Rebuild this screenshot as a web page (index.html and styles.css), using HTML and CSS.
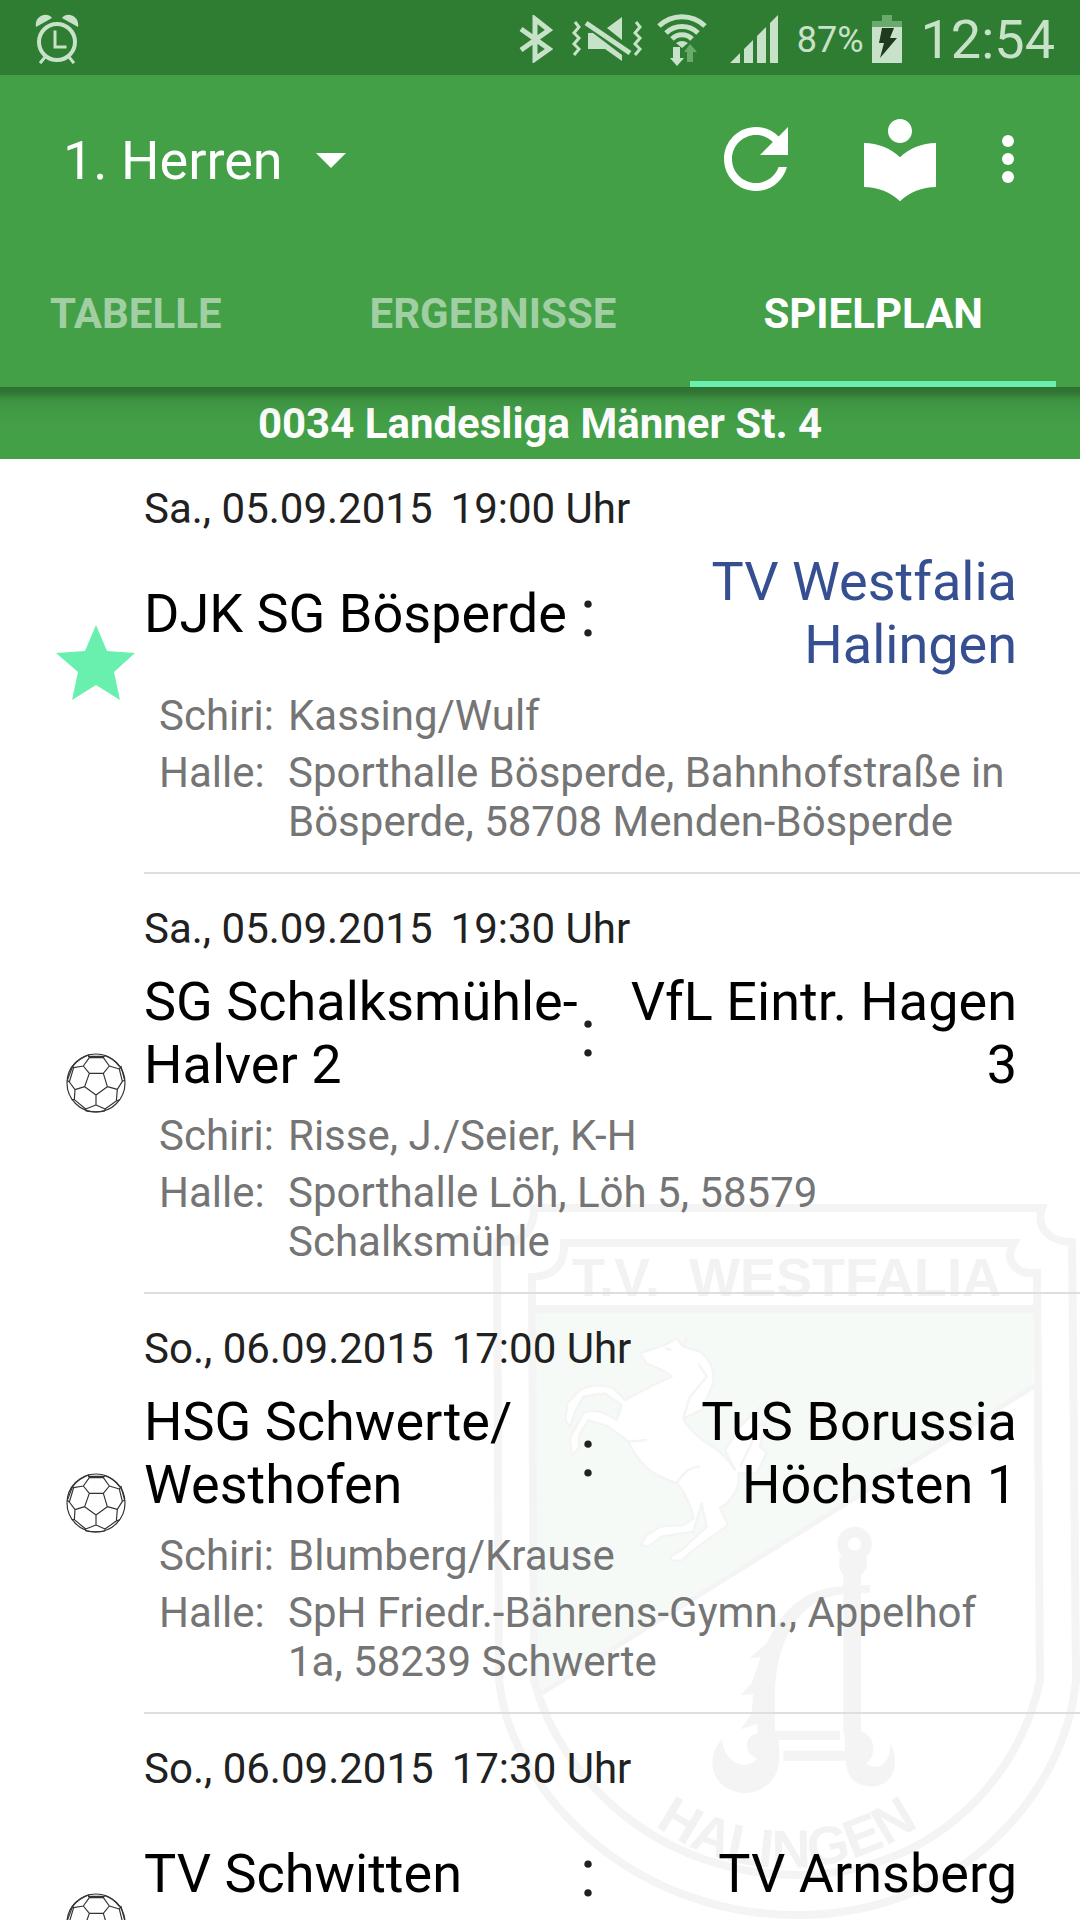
FILE: index.html
```html
<!DOCTYPE html>
<html lang="de">
<head>
<meta charset="utf-8">
<meta name="viewport" content="width=device-width, initial-scale=1">
<title>Spielplan</title>
<link rel="stylesheet" href="styles.css">
</head>
<body>
<svg class="defs" width="0" height="0" aria-hidden="true">
  <symbol id="ball" viewBox="78 68 180 180">
    <g fill="none" stroke="#333" stroke-width="3.5" stroke-linejoin="round">
      <circle cx="168" cy="158" r="87"/>
      <path d="M148 129H190L202 169L168 194L134 169ZM148 129L130 107L148 82H190L208 107L190 129M130 107L101 112L88 155L105 178L134 169M208 107L238 116L247 153L232 177L202 169M168 194V224L137 236L103 208L105 178M168 224L195 236L229 212L232 177M148 82L144 73M190 82L195 74M144 78H194M101 112L98 108L82 150L88 155M238 116L243 108L254 150L247 153M103 208L95 208M229 212L240 208M137 236L137 242M195 236L195 242M137 242Q168 247 195 242M148 73Q115 85 98 108M238 108Q220 84 195 76"/>
    </g>
  </symbol>
</svg>

<div class="statusbar">
  <svg class="alarm" width="44" height="50" viewBox="0 0 44 50" aria-label="Wecker">
    <g fill="none" stroke="#c8e2c9" stroke-width="4"><circle cx="22" cy="28" r="18"/><path d="M20 18V33H30M10 43L6 48M34 43L38 48" stroke-width="3" stroke-linecap="square"/></g>
    <path d="M1 13C-1 2 12-3 17 4ZM43 13C45 2 32-3 27 4Z" fill="#c8e2c9"/>
  </svg>
  <div class="status-right">
    <svg width="34" height="48" viewBox="0 0 34 48"><path d="M2 14L30 34L16 44V4L30 15L2 35" fill="none" stroke="#c8e2c9" stroke-width="5"/></svg>
    <svg class="mute" width="66" height="48" viewBox="0 0 66 48">
      <path d="M3 7l4 5-5 6 5 5-5 6 5 5-5 6M64 7l4 5-5 6 5 5-5 6 5 5-5 6" fill="none" stroke="#c8e2c9" stroke-width="3"/>
      <path d="M35 13L50 2V25ZM16 18H21L50 40V46L33 34H16Z" fill="#c8e2c9"/>
      <path d="M14 8L58 38" stroke="#c8e2c9" stroke-width="5"/>
    </svg>
    <svg width="54" height="54" viewBox="0 0 54 54">
      <path d="M2 14A33 33 0 0 1 48 14M9 21A23 23 0 0 1 41 21M15 27A14 14 0 0 1 35 27" fill="none" stroke="#c8e2c9" stroke-width="5"/>
      <path d="M19 31Q25 27 31 31L25 36ZM16 35H23V46H27L20 54L13 46H16Z" fill="#c8e2c9"/>
      <path d="M33 32L40 40H36V50H30V40H27Z" fill="#68ab6b"/>
    </svg>
    <svg width="48" height="48" viewBox="0 0 48 48"><path d="M0 48L10 38V48ZM14 48V34L23 25V48ZM27 48V21L36 12V48ZM40 48V8L48 0V48Z" fill="#c8e2c9"/></svg>
    <div class="charge">
      <span class="percent">87%</span>
      <svg width="30" height="48" viewBox="0 0 30 48"><path d="M10 0H20V6H30V12H0V6H10Z" fill="#6aab6d"/><path d="M0 12H30V48H0Z" fill="#c8e2c9"/><path d="M10 13H22L18 23H25L8 43L12 28H7Z" fill="#1d3a1f"/></svg>
    </div>
    <span class="clock">12:54</span>
  </div>
</div>

<header class="appbar">
  <div class="toolbar">
    <label class="picker">
      <select aria-label="Mannschaft"><option>1. Herren</option></select>
      <svg width="30" height="16" viewBox="0 0 30 16"><path d="M0 0H30L15 15Z" fill="#fff"/></svg>
    </label>
    <button class="tool" aria-label="Aktualisieren"><svg width="96" height="96" viewBox="0 0 24 24"><path fill="#fff" d="M17.650 6.350C16.200 4.900 14.210 4 12 4c-4.420 0-7.990 3.580-7.990 8s3.570 8 7.990 8c3.730 0 6.840-2.550 7.730-6h-2.080c-.82 2.330-3.040 4-5.650 4-3.310 0-6-2.690-6-6s2.690-6 6-6c1.660 0 3.140.69 4.220 1.780L13 11h7V4l-2.350 2.350z"/></svg></button>
    <button class="tool" aria-label="Berichte"><svg width="96" height="96" viewBox="0 0 24 24"><path fill="#fff" d="M12 11.550C9.640 9.350 6.480 8 3 8v11c3.480 0 6.640 1.350 9 3.550 2.360-2.190 5.520-3.550 9-3.550V8c-3.480 0-6.640 1.350-9 3.550zM12 8c1.660 0 3-1.340 3-3s-1.340-3-3-3-3 1.340-3 3 1.340 3 3 3z"/></svg></button>
    <button class="tool tool-more" aria-label="Mehr"><svg width="96" height="96" viewBox="0 0 24 24"><g fill="#fff"><circle cx="12" cy="7.500" r="1.500"/><circle cx="12" cy="12" r="1.500"/><circle cx="12" cy="16.500" r="1.500"/></g></svg></button>
  </div>
  <nav class="tabs">
    <a class="tab" href="#tabelle">TABELLE</a>
    <a class="tab" href="#ergebnisse">ERGEBNISSE</a>
    <a class="tab tab-active" href="#spielplan" aria-current="page">SPIELPLAN</a>
  </nav>
</header>

<main class="schedule">
  <svg class="crest" width="600" height="730" viewBox="0 0 600 730" aria-hidden="true">
    <path d="M56 123H553V197L60 505L56 490Z" fill="#f5faf7"/>
    <g fill="none" stroke="#f4f4f4" stroke-width="8">
      <path d="M17 52H25C46 52 54 36 54 18H562C555 40 572 52 592 52L596 490C586 600 484 725 317 725C150 725 30 600 19 490Z"/>
      <path d="M52 87C75 86 85 74 84 53H534C524 70 535 85 557 83L560 490C540 590 450 685 317 685C180 685 80 590 54 490Z"/>
      <path d="M56 119H554"/>
      <path d="M556 195L62 503" stroke-width="5"/>
    </g>
    <g transform="scale(.333333)" stroke="#f4f4f4" stroke-width="7" stroke-linejoin="round">
      <path fill="#fff" d="M480 490L555 465L590 445L610 470L660 485Q705 520 700 580L665 660L610 685Q630 730 705 775Q740 800 765 840L735 780L780 710L840 650L820 720L855 700L840 770L860 790L830 850L775 850Q785 910 720 955L745 1005L640 1080L605 1112L575 1112L572 1098L605 1080L680 1010L665 940L640 1025L545 1040L505 1070L482 1065L500 1035L540 1010L610 1005L642 985Q620 910 590 880L540 860Q480 830 445 755L385 710L325 690L298 735L296 775L275 798L270 745L310 668Q350 650 410 690L425 645L375 610L310 620L285 665L270 712L256 690L262 640L300 600Q350 575 400 595L435 630L510 590L575 560L555 545L500 520Z"/>
      <path fill="none" d="M425 645L410 690M590 880Q620 830 660 830M445 755L500 750M610 685L630 620L680 560L655 520M780 830L810 770L840 700M555 475L575 480M610 470L620 440"/>
    </g>
    <g transform="translate(80 330) scale(.333333)" fill="#f4f4f4">
      <circle cx="884" cy="72" r="36" fill="none" stroke="#f4f4f4" stroke-width="32"/>
      <path d="M838 110H920V145L903 165V195H930V218H903V632C945 650 955 700 918 732C960 755 990 730 992 670C1018 720 1010 800 930 800C880 795 860 770 858 722H670V692H855V660L850 630V222C700 240 650 380 645 520V632H840V660H655C670 750 640 815 550 820C440 805 440 700 487 658C490 730 560 755 592 715C550 700 550 650 592 640L592 612L542 628L575 580L580 522L542 525L575 490L602 412L568 415L620 370C670 260 740 205 850 198V165L838 145Z"/>
    </g>
    <g class="crest-text">
      <text x="92" y="106">T.V.</text>
      <text x="209" y="106">WESTFALIA</text>
      <path id="arc" d="M160 624A227 227 0 0 0 454 624" fill="none"/>
      <text text-anchor="middle"><textPath href="#arc" startOffset="50%">HALINGEN</textPath></text>
    </g>
  </svg>

  <h1 class="league">0034 Landesliga Männer St. 4</h1>
  <ul class="matches">
    <li class="match">
      <div class="marker"><svg width="80" height="76" viewBox="0 0 80 76"><path d="M40 0L51 26L79 28L58 47L64 75L40 60L16 75L22 47L0 28L29 26Z" fill="#69f0ae"/></svg></div>
      <div class="info">
        <time class="date">Sa., 05.09.2015 <span>19:00 Uhr</span></time>
        <div class="teams"><span>DJK SG Bösperde</span><span class="versus">:</span><span class="guest own">TV Westfalia Halingen</span></div>
        <dl class="details"><dt>Schiri:</dt><dd>Kassing/Wulf</dd><dt>Halle:</dt><dd>Sporthalle Bösperde, Bahnhofstraße in Bösperde, 58708 Menden-Bösperde</dd></dl>
      </div>
    </li>
    <li class="match">
      <div class="marker"><svg width="60" height="60"><use href="#ball"/></svg></div>
      <div class="info">
        <time class="date">Sa., 05.09.2015 <span>19:30 Uhr</span></time>
        <div class="teams"><span>SG Schalksmühle-Halver 2</span><span class="versus">:</span><span class="guest">VfL Eintr. Hagen 3</span></div>
        <dl class="details"><dt>Schiri:</dt><dd>Risse, J./Seier, K-H</dd><dt>Halle:</dt><dd>Sporthalle Löh, Löh 5, 58579 Schalksmühle</dd></dl>
      </div>
    </li>
    <li class="match">
      <div class="marker"><svg width="60" height="60"><use href="#ball"/></svg></div>
      <div class="info">
        <time class="date">So., 06.09.2015 <span>17:00 Uhr</span></time>
        <div class="teams"><span>HSG Schwerte/<wbr>Westhofen</span><span class="versus">:</span><span class="guest">TuS Borussia Höchsten 1</span></div>
        <dl class="details"><dt>Schiri:</dt><dd>Blumberg/Krause</dd><dt>Halle:</dt><dd>SpH Friedr.-Bährens-Gymn., Appelhof 1a, 58239 Schwerte</dd></dl>
      </div>
    </li>
    <li class="match">
      <div class="marker"><svg width="60" height="60"><use href="#ball"/></svg></div>
      <div class="info">
        <time class="date">So., 06.09.2015 <span>17:30 Uhr</span></time>
        <div class="teams"><span>TV Schwitten</span><span class="versus">:</span><span class="guest">TV Arnsberg</span></div>
      </div>
    </li>
  </ul>
</main>
</body>
</html>
```
FILE: styles.css
```css
* { box-sizing: border-box; }

body {
  margin: 0;
  height: 100vh;
  overflow: hidden;
  display: flex;
  flex-direction: column;
  background: #fff;
  color: #212121;
  font-family: Roboto, sans-serif;
  font-size: 42px;
  line-height: 49px;
}

svg { display: block; flex: none; }
.defs { position: absolute; }

/* System status bar */
.statusbar {
  flex: none;
  display: flex;
  align-items: center;
  justify-content: space-between;
  height: 75px;
  padding: 2px 25px 0 35px;
  background: #2e7d32;
  color: #c8e2c9;
}
.status-right { display: flex; align-items: center; gap: 19px; }
.mute { overflow: visible; }
.charge { display: flex; align-items: center; gap: 8px; }
.percent { padding-top: 4px; font-size: 36px; }
.clock { padding-top: 2px; font-size: 54px; line-height: 63px; }

/* App bar */
.appbar {
  flex: none;
  position: relative;
  z-index: 1;
  background: #43a047;
}
.appbar::after {
  content: "";
  position: absolute;
  top: 100%;
  left: 0;
  right: 0;
  height: 40px;
  background: linear-gradient(rgba(0, 0, 0, .3), rgba(0, 0, 0, .26) 6px, rgba(0, 0, 0, .1) 12px, rgba(0, 0, 0, .05) 20px, transparent);
}
.toolbar {
  display: flex;
  align-items: center;
  height: 168px;
  padding: 0 36px 0 63px;
}
.picker {
  display: flex;
  align-items: center;
  gap: 33px;
  margin-right: auto;
  padding-top: 3px;
}
.picker select {
  appearance: none;
  padding: 0;
  border: 0;
  background: none;
  color: #fff;
  font: inherit;
  font-size: 54px;
  line-height: 63px;
}
.tool {
  display: flex;
  justify-content: center;
  width: 144px;
  padding: 0;
  border: 0;
  background: none;
}
.tool-more { width: 72px; }

.tabs {
  display: flex;
  justify-content: flex-end;
  height: 144px;
  padding-right: 24px;
  overflow: hidden;
}
.tab {
  display: flex;
  align-items: center;
  padding: 2px 74px 0;
  border-bottom: 6px solid transparent;
  color: rgba(255, 255, 255, .5);
  font-weight: 700;
  text-decoration: none;
}
.tab-active {
  padding: 2px 73px 0;
  border-bottom-color: #69f0ae;
  color: #fff;
}

/* Match list */
.schedule {
  flex: 1;
  min-height: 0;
  position: relative;
  overflow: hidden;
}
.league {
  margin: 0;
  padding: 12px 0 11px;
  background: #43a047;
  color: #fff;
  font-size: 42px;
  font-weight: 700;
  text-align: center;
}
.crest { position: absolute; right: 0; bottom: 0; }
.crest-text {
  fill: #f2f2f2;
  font-family: "Liberation Sans", sans-serif;
  font-size: 54px;
  font-weight: 700;
}

.matches {
  position: relative;
  display: flex;
  flex-direction: column;
  gap: 5px;
  margin: 0;
  padding: 0;
  list-style: none;
}
.match {
  display: flex;
  min-height: 415px;
  padding-left: 48px;
}
.marker {
  flex: none;
  display: flex;
  align-items: center;
  justify-content: center;
  width: 96px;
  padding-bottom: 8px;
}
.info {
  flex: 1;
  padding: 25px 48px 24px 0;
  border-bottom: 2px solid #dedede;
}
.date { display: flex; gap: 18px; }
.teams {
  display: grid;
  grid-template-columns: 1fr auto 1fr;
  align-items: center;
  min-height: 126px;
  margin: 17px 0 15px;
  color: #000;
  font-size: 54px;
  line-height: 63px;
}
.versus { color: #212121; font-size: 66px; }
.guest { padding-right: 15px; text-align: right; }
.own { color: #354f91; }
.details {
  display: grid;
  grid-template-columns: 129px 1fr;
  row-gap: 8px;
  margin: 0;
  padding: 0 0 0 15px;
  color: #757575;
}
.details dd { margin: 0; }
```
